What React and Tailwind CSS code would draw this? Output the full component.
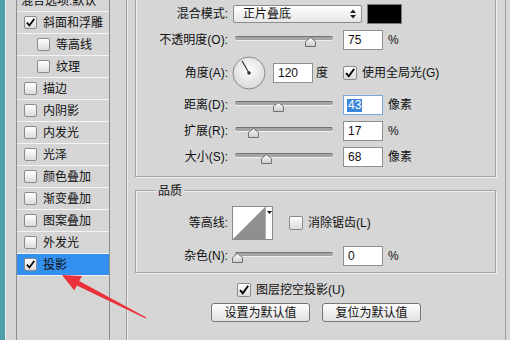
import React from 'react'

const FONT = { fontFamily: '"Liberation Sans", "Noto Sans CJK SC", sans-serif' }

function Check({ checked, size = 13 }) {
  return (
    <div
      className="shrink-0 rounded-[2px] border border-[#8a8a8a] bg-gradient-to-b from-white to-[#dcdcdc] flex items-center justify-center"
      style={{ width: size, height: size }}
    >
      {checked && (
        <svg width={size - 2} height={size - 2} viewBox="0 0 12 12">
          <path d="M2 6.2 L4.8 9.2 L10.2 1.8" fill="none" stroke="#000" strokeWidth="1.9" />
        </svg>
      )}
    </div>
  )
}

const effects = [
  { name: '斜面和浮雕', checked: true },
  { name: '等高线', sub: true },
  { name: '纹理', sub: true },
  { name: '描边' },
  { name: '内阴影' },
  { name: '内发光' },
  { name: '光泽' },
  { name: '颜色叠加' },
  { name: '渐变叠加' },
  { name: '图案叠加' },
  { name: '外发光' },
  { name: '投影', checked: true, active: true },
]

function Thumb({ x }) {
  return (
    <svg className="absolute top-[7px]" style={{ left: x - 5.5 }} width="11" height="10" viewBox="0 0 11 10">
      <defs>
        <linearGradient id="tg" x1="0" y1="0" x2="0" y2="1">
          <stop offset="0" stopColor="#ffffff" />
          <stop offset="1" stopColor="#c9c9c9" />
        </linearGradient>
      </defs>
      <polygon points="5.5,0.5 10.5,4.5 10.5,9.5 0.5,9.5 0.5,4.5" fill="url(#tg)" stroke="#707070" />
    </svg>
  )
}

function Slider({ x }) {
  return (
    <div className="relative w-[98px] h-[20px] ml-[7px] shrink-0">
      <div className="mt-[6px] h-[4px] rounded-full bg-[#a4a4a4] border-t border-[#737373] shadow-[0_1px_0_#efefef]" />
      <Thumb x={x} />
    </div>
  )
}

function ValueBox({ value, focus }) {
  return (
    <div
      className={`ml-[10px] w-[40px] h-[20px] shrink-0 bg-white border flex items-center pl-[3px] text-[12px] ${
        focus ? 'border-[#7aa7d8]' : 'border-[#8f8f8f]'
      }`}
    >
      {focus ? <span className="bg-[#3a86dc] text-white leading-[13px] px-[1px]">{value}</span> : <span className="px-[1px]">{value}</span>}
    </div>
  )
}

function Label({ children }) {
  return <div className="w-[92px] shrink-0 text-right text-[12px] whitespace-nowrap">{children}</div>
}

function SliderRow({ label, x, value, unit, focus, className = '' }) {
  return (
    <div className={`flex items-center h-[20px] ${className}`}>
      <Label>{label}</Label>
      <Slider x={x} />
      <ValueBox value={value} focus={focus} />
      <span className="ml-[5px] text-[12px]">{unit}</span>
    </div>
  )
}

function Button({ children, className = '' }) {
  return (
    <div
      className={`w-[99px] h-[19px] rounded-[3px] border border-[#767676] bg-gradient-to-b from-[#fdfdfd] to-[#e2e2e2] flex items-center justify-center text-[12px] ${className}`}
    >
      {children}
    </div>
  )
}

export default function App() {
  return (
    <div className="relative w-[510px] h-[340px] overflow-hidden bg-[#d6d6d6] text-[#111] flex" style={FONT}>
      {/* left strip */}
      <div className="w-[5px] h-full bg-[#4f9dab] shrink-0" />
      <div className="w-[11px] h-full border-l border-[#ececec] shrink-0" />

      {/* effect list */}
      <div className="w-[94px] h-full shrink-0 border-l border-r border-[#8d8d8d] bg-[#d5d5d5] flex flex-col">
        <div className="-mt-[10px] h-[22px] border-b border-[#f3f3f3] flex items-center pl-[4px] text-[12px] whitespace-nowrap">
          混合选项:默认
        </div>
        {effects.map((e) => (
          <div
            key={e.name}
            className={`h-[22px] border-b border-[#f3f3f3] flex items-center text-[12px] ${
              e.sub ? 'pl-[20px]' : 'pl-[7px]'
            } ${e.active ? 'bg-[#3390ee]' : ''}`}
          >
            <Check checked={e.checked} />
            <span className="ml-[6px]">{e.name}</span>
          </div>
        ))}
      </div>

      <div className="w-[16px] shrink-0" />

      {/* dialog panel */}
      <div className="w-[380px] h-full shrink-0 border-l border-r border-[#9c9c9c] shadow-[inset_1px_0_0_#eeeeee] pl-[8px] pr-[9px] flex flex-col">
        {/* structure group */}
        <div className="-mt-[10px] border border-[#a3a3a3] shadow-[inset_1px_1px_0_#f1f1f1,1px_1px_0_#f1f1f1] pt-[14px] pb-[9px] flex flex-col">
          <div className="flex items-center h-[18px]">
            <Label>混合模式:</Label>
            <div className="ml-[5px] w-[129px] h-[18px] rounded-[2px] border border-[#8c8c8c] bg-gradient-to-b from-white to-[#e6e6e6] flex items-center pl-[9px] pr-[5px] text-[12px]">
              <span className="flex-1">正片叠底</span>
              <svg width="6" height="10" viewBox="0 0 6 10">
                <polygon points="3,0.5 6,4 0,4" fill="#222" />
                <polygon points="0,6 6,6 3,9.5" fill="#222" />
              </svg>
            </div>
            <div className="ml-[5px] w-[35px] h-[20px] bg-black border border-[#7a7a7a]" />
          </div>

          <SliderRow label="不透明度(O):" x={75} value="75" unit="%" className="mt-[7px]" />

          <div className="flex items-center h-[33px] mt-[6px]">
            <Label>角度(A):</Label>
            <svg className="ml-[4px] shrink-0" width="34" height="34" viewBox="0 0 34 34">
              <defs>
                <radialGradient id="dial" cx="0.5" cy="0.4" r="0.6">
                  <stop offset="0" stopColor="#ffffff" />
                  <stop offset="1" stopColor="#d8d8d8" />
                </radialGradient>
              </defs>
              <circle cx="17" cy="17" r="16" fill="url(#dial)" stroke="#8a8a8a" />
              <line x1="17" y1="17" x2="10" y2="4.9" stroke="#333" strokeWidth="1.1" />
              <circle cx="17" cy="17" r="1.8" fill="#333" />
            </svg>
            <div className="ml-[7px] w-[40px] h-[20px] bg-white border border-[#8f8f8f] flex items-center pl-[4px] text-[12px]">120</div>
            <span className="ml-[3px] text-[12px]">度</span>
            <div className="ml-[15px]">
              <Check checked size={14} />
            </div>
            <span className="ml-[5px] text-[12px]">使用全局光(G)</span>
          </div>

          <SliderRow label="距离(D):" x={43} value="43" unit="像素" focus className="mt-[6px]" />
          <SliderRow label="扩展(R):" x={18} value="17" unit="%" className="mt-[6px]" />
          <SliderRow label="大小(S):" x={31} value="68" unit="像素" className="mt-[6px]" />
        </div>

        {/* quality group */}
        <div className="relative mt-[13px] border border-[#a3a3a3] shadow-[inset_1px_1px_0_#f1f1f1,1px_1px_0_#f1f1f1] pt-[15px] pb-[6px] flex flex-col">
          <div className="absolute -top-[9px] left-[20px] px-[2px] bg-[#d6d6d6] text-[12px]">品质</div>
          <div className="flex items-center h-[34px]">
            <Label>等高线:</Label>
            <div className="ml-[4px] w-[41px] h-[34px] shrink-0 border border-[#8a8a8a] bg-white flex">
              <svg width="32" height="32" viewBox="0 0 32 32">
                <polygon points="0,32 32,0 32,32" fill="#8f8f8f" />
              </svg>
              <div className="flex-1 border-l border-[#b0b0b0] flex justify-center pt-[4px]">
                <svg width="5" height="3" viewBox="0 0 5 3">
                  <polygon points="0,0 5,0 2.5,3" fill="#111" />
                </svg>
              </div>
            </div>
            <div className="ml-[16px]">
              <Check size={14} />
            </div>
            <span className="ml-[5px] text-[12px]">消除锯齿(L)</span>
          </div>
          <SliderRow label="杂色(N):" x={2} value="0" unit="%" className="mt-[6px]" />
        </div>

        <div className="flex items-center h-[14px] mt-[10px] ml-[102px]">
          <Check checked size={14} />
          <span className="ml-[5px] text-[12px]">图层挖空投影(U)</span>
        </div>

        <div className="flex mt-[6px] ml-[76px]">
          <Button>设置为默认值</Button>
          <Button className="ml-[12px]">复位为默认值</Button>
        </div>
      </div>

      {/* red annotation arrow */}
      <svg className="absolute inset-0 pointer-events-none" width="510" height="340" viewBox="0 0 510 340">
        <polygon
          points="62,275 82,276 79.2,281.1 146.3,317.6 145.7,318.4 76.8,285.6 74.3,290.6"
          fill="#ea3038"
        />
      </svg>
    </div>
  )
}
